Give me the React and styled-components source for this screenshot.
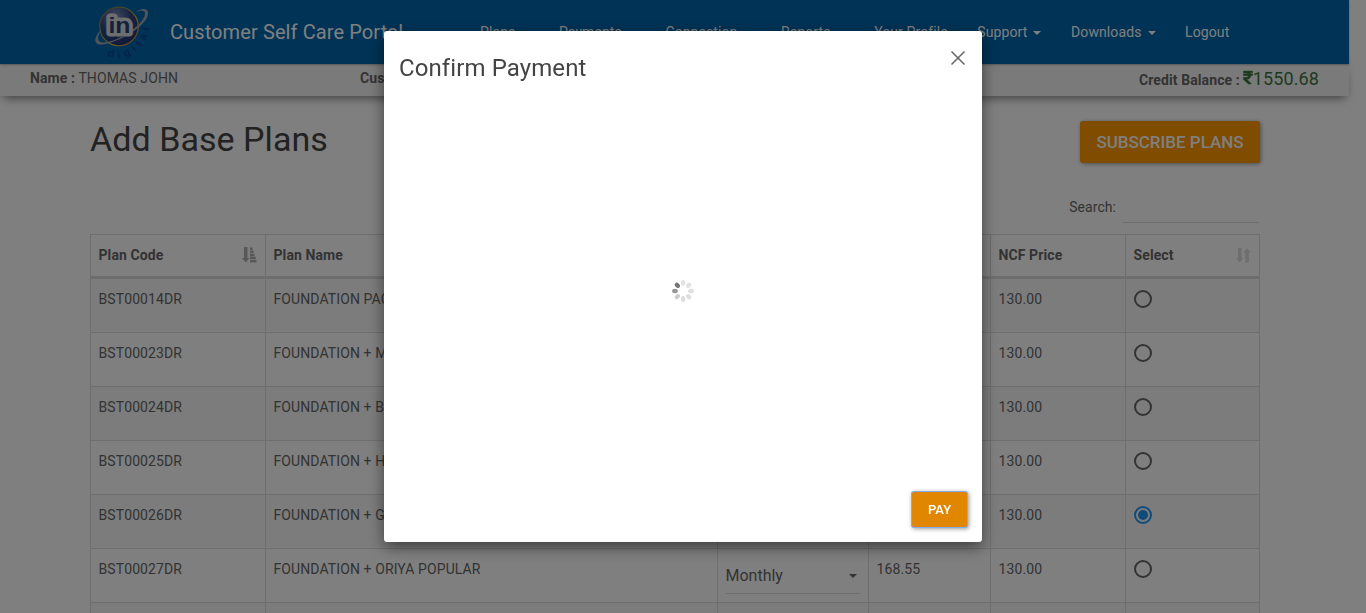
import React from "react";
import styled, { createGlobalStyle, css } from "styled-components";
import { FaRupeeSign } from "react-icons/fa";

const GlobalStyle = createGlobalStyle`
  *, *::before, *::after { box-sizing: border-box; }
  html, body { margin: 0; padding: 0; height: 613px; overflow: hidden; background: #fff; }
  body { font-family: Roboto, "Liberation Sans", sans-serif; font-size: 14px; line-height: 20px; color: #666; }
  h1, h4, p { margin: 0; font-weight: 400; }
  button, input { font-family: inherit; }
`;

const Page = styled.div`
  width: 1366px;
  height: 613px;
  padding-right: 17px;
  overflow: hidden;
`;

const Navbar = styled.header`
  position: relative;
  z-index: 2;
  display: flex;
  align-items: center;
  height: 64px;
  padding-left: 90px;
  background: #0066ad;
  color: #fff;
  box-shadow: 0 1px 2px rgba(0, 0, 0, 0.3);
`;

const Logo = styled.svg`
  flex: none;
  width: 64px;
  height: 64px;
`;

const Brand = styled.div`
  width: 296px;
  padding-left: 16px;
  font-size: 20px;
  letter-spacing: 0.1px;
  white-space: nowrap;
`;

const NavMenu = styled.nav`
  display: flex;
  gap: 29.6px;
  padding-left: 30px;
`;

const NavItem = styled.a`
  display: flex;
  align-items: center;
  font-size: 14px;
  letter-spacing: 0.1px;
  color: #fff;
  white-space: nowrap;
`;

const Caret = styled.span`
  width: 0;
  height: 0;
  margin-top: ${(p) => p.$drop || 0}px;
  margin-left: 6px;
  border-top: 4px solid currentColor;
  border-left: 4px solid transparent;
  border-right: 4px solid transparent;
`;

const AccountBar = styled.section`
  position: relative;
  z-index: 1;
  display: grid;
  grid-template-columns: 330px 1fr auto;
  height: 32px;
  padding: 4px 30px 0;
  background: #f5f5f5;
  box-shadow: 0 7px 10px -4px rgba(0, 0, 0, 0.4), 0 0 8px rgba(0, 0, 0, 0.1);
  letter-spacing: 0.1px;
`;

const Balance = styled.div`
  display: flex;
  align-items: baseline;
  height: 22px;
  padding-top: 1px;
`;

const Amount = styled.span`
  display: flex;
  align-items: baseline;
  margin-left: 3px;
  color: #3c763d;
  font-size: 18px;
  letter-spacing: 0.1px;
  svg { width: 10px; height: 15px; stroke: currentColor; stroke-width: 14px; }
`;

const Main = styled.main`
  width: 1170px;
  margin-left: 90px;
`;

const TitleRow = styled.div`
  display: flex;
  justify-content: space-between;
  height: 96px;
  padding-top: 23px;
`;

const Title = styled.h1`
  font-size: 34px;
  line-height: 40px;
  letter-spacing: 0.05px;
  color: #444;
`;

const SubscribeButton = styled.button`
  width: 180px;
  height: 42px;
  margin-top: 2px;
  padding: 0;
  border: 0;
  border-radius: 3px;
  background: #ff9800;
  color: #fff;
  font-size: 17px;
  font-weight: 500;
  letter-spacing: -0.02px;
  box-shadow: 1px 1px 4px rgba(0, 0, 0, 0.4);
`;

const SearchRow = styled.label`
  display: flex;
  justify-content: flex-end;
  height: 31px;
  padding-right: 1px;
  line-height: 30px;
  letter-spacing: 0.05px;
`;

const SearchInput = styled.input`
  width: 137px;
  height: 31px;
  margin-left: 6px;
  padding: 0;
  border: 0;
  border-bottom: 1px solid #ddd;
  background: transparent;
`;

const Table = styled.div`
  margin-top: 11px;
  border-top: 1px solid #ddd;
  border-left: 1px solid #ddd;
`;

const Row = styled.div`
  display: grid;
  grid-template-columns: 175px 452px 151px 122px 135px 134px;
  height: ${(p) => (p.$head ? 44 : 54)}px;
  background: ${(p) => (p.$striped ? "#f9f9f9" : "#fff")};
`;

const Cell = styled.div`
  padding: 10px 8px 0 7.5px;
  border-right: 1px solid #ddd;
  border-bottom: 1px solid #ddd;
  letter-spacing: 0.1px;
  white-space: nowrap;
  ${(p) => p.$head && css`
    display: flex;
    justify-content: space-between;
    border-bottom-width: 3px;
    font-weight: 700;
  `}
`;

const SortIcon = styled.svg`
  width: 15px;
  height: 16px;
  margin-top: 2px;
  fill: #666;
  opacity: ${(p) => (p.$active ? 0.5 : 0.22)};
`;

const Select = styled.div`
  display: flex;
  justify-content: space-between;
  align-items: center;
  height: 35px;
  padding-right: 3px;
  border-bottom: 1px solid #ddd;
  font-size: 16px;
  letter-spacing: 0;
  color: #666;
`;

const Radio = styled.span`
  display: flex;
  align-items: center;
  justify-content: center;
  width: 18px;
  height: 18px;
  margin-top: 1px;
  border: 2px solid ${(p) => (p.$checked ? "#2196f3" : "#666")};
  border-radius: 50%;
  &::after {
    content: "";
    width: 10px;
    height: 10px;
    border-radius: 50%;
    background: ${(p) => (p.$checked ? "#2196f3" : "transparent")};
  }
`;

const Backdrop = styled.div`
  position: fixed;
  inset: 0;
  z-index: 10;
  padding-top: 31px;
  background: rgba(0, 0, 0, 0.5);
`;

const Dialog = styled.section`
  display: flex;
  flex-direction: column;
  width: 598px;
  height: 511px;
  margin: 0 auto;
  border-radius: 3px;
  background: #fff;
  box-shadow: 0 5px 15px rgba(0, 0, 0, 0.5);
`;

const DialogHeader = styled.div`
  display: flex;
  justify-content: space-between;
  height: 60px;
  padding: 20px 16px 0 15px;
`;

const DialogTitle = styled.h4`
  font-size: 24px;
  line-height: 34px;
  letter-spacing: 0.1px;
  color: #444;
`;

const CloseIcon = styled.svg`
  width: 16px;
  height: 16px;
  stroke: #666;
  stroke-width: 1.5;
`;

const DialogBody = styled.div`
  flex: 1;
  display: flex;
  justify-content: center;
  padding-top: 188px;
`;

const DialogFooter = styled.div`
  display: flex;
  justify-content: flex-end;
  height: 50px;
  padding-right: 15px;
`;

const PayButton = styled.button`
  width: 55px;
  height: 35px;
  padding: 0;
  border: 0;
  border-radius: 2px;
  background: #e08600;
  color: #fff;
  font-size: 13px;
  font-weight: 500;
  box-shadow: 0 0 0 1px #82aceb, 1px 1px 4px 1px rgba(0, 0, 0, 0.4);
`;

const navItems = [
  ["Plans", true],
  ["Payments", true],
  ["Connection", true],
  ["Reports", true],
  ["Your Profile", false],
  ["Support", true],
  ["Downloads", true],
  ["Logout", false],
];

const plans = [
  ["BST00014DR", "FOUNDATION PACK"],
  ["BST00023DR", "FOUNDATION + MARATHI POPULAR"],
  ["BST00024DR", "FOUNDATION + BENGALI POPULAR"],
  ["BST00025DR", "FOUNDATION + HINDI POPULAR"],
  ["BST00026DR", "FOUNDATION + GUJARATI POPULAR"],
  ["BST00027DR", "FOUNDATION + ORIYA POPULAR"],
];
const selectedPlan = "BST00026DR";

const spokes = ["#e3e3e3", "#e3e3e3", "#e0e0e0", "#dedede", "#dcdcdc", "#cdcdcd", "#999", "#777"];

function BrandLogo() {
  return (
    <Logo viewBox="0 0 64 64">
      <defs>
        <radialGradient id="globe" cx="0.4" cy="0.25" r="0.8">
          <stop offset="0" stopColor="#7d92c4" />
          <stop offset="0.5" stopColor="#33477f" />
          <stop offset="1" stopColor="#1b3370" />
        </radialGradient>
        <linearGradient id="rim" x1="0" y1="0" x2="1" y2="1">
          <stop offset="0" stopColor="#b8544a" />
          <stop offset="0.35" stopColor="#7aa04f" />
          <stop offset="0.65" stopColor="#d6b64c" />
          <stop offset="1" stopColor="#c65b3a" />
        </linearGradient>
        <path id="arc" d="M17 56 Q31 61 44 53 Q58 43 60 24" />
      </defs>
      <circle cx="29" cy="26.5" r="19.3" fill="url(#globe)" stroke="url(#rim)" strokeWidth="1.3" />
      <path d="M12 29 C3 37 3 46 13 44.5 C27 43 60 25 58 12 C56.5 7 50 9 46 12 C52 10 55 10 55 14 C54 25 27 42 14 42.5 C6 43 7 36 12 29Z" fill="#9ea8b3" />
      <text x="18.5" y="33" fontFamily="Liberation Sans, sans-serif" fontSize="22" fontWeight="700" fill="#2c3f78" stroke="#d9dce0" strokeWidth="7" strokeLinejoin="round" paintOrder="stroke" textLength="22" lengthAdjust="spacingAndGlyphs">in</text>
      <text fontFamily="Liberation Sans, sans-serif" fontSize="11" fontWeight="700" fill="#08459f" letterSpacing="4.3">
        <textPath href="#arc">digital</textPath>
      </text>
    </Logo>
  );
}

function SortActive() {
  return (
    <SortIcon $active viewBox="0 0 15 16">
      <path d="M2 0h3.5v11h2L3.75 15.5 0 11h2zM8 .5h2.5v2.5H8zM8 3.6h3.5v2.5H8zM8 6.7h4.5v2.5H8zM8 9.8h5.7v2.5H8zM8 12.9h6.5v2.5H8z" />
    </SortIcon>
  );
}

function SortIdle() {
  return (
    <SortIcon viewBox="0 0 15 16">
      <path d="M2 1h3.5v10h2L3.75 15.5 0 11h2zM9.3 15.5h3.5V5.5h2L11 1 7.3 5.5h2z" />
    </SortIcon>
  );
}

function Spinner() {
  return (
    <svg width="24" height="24" viewBox="-12 -12 24 24">
      {spokes.map((fill, i) => (
        <ellipse key={i} cx="0" cy="-8" rx="2.2" ry="2.9" fill={fill} transform={`rotate(${i * 45})`} />
      ))}
    </svg>
  );
}

function PlanRow({ code, name, striped }) {
  return (
    <Row $striped={striped}>
      <Cell>{code}</Cell>
      <Cell>{name}</Cell>
      <Cell><Select>Monthly<Caret /></Select></Cell>
      <Cell>168.55</Cell>
      <Cell>130.00</Cell>
      <Cell><Radio $checked={code === selectedPlan} /></Cell>
    </Row>
  );
}

function EmptyRow() {
  return (
    <Row $striped>
      <Cell /><Cell /><Cell /><Cell /><Cell /><Cell />
    </Row>
  );
}

export default function App() {
  return (
    <>
      <GlobalStyle />
      <Page>
        <Navbar>
          <BrandLogo />
          <Brand>Customer Self Care Portal</Brand>
          <NavMenu>
            {navItems.map(([label, menu]) => (
              <NavItem key={label}>{label}{menu && <Caret $drop={2} />}</NavItem>
            ))}
          </NavMenu>
        </Navbar>
        <AccountBar>
          <div><b>Name :</b> THOMAS JOHN</div>
          <div><b>Customer ID :</b></div>
          <Balance><b>Credit Balance :</b><Amount><FaRupeeSign />1550.68</Amount></Balance>
        </AccountBar>
        <Main>
          <TitleRow>
            <Title>Add Base Plans</Title>
            <SubscribeButton>SUBSCRIBE PLANS</SubscribeButton>
          </TitleRow>
          <SearchRow>Search:<SearchInput /></SearchRow>
          <Table>
            <Row $head>
              <Cell $head>Plan Code<SortActive /></Cell>
              <Cell $head>Plan Name</Cell>
              <Cell $head>Duration</Cell>
              <Cell $head>Price</Cell>
              <Cell $head>NCF Price</Cell>
              <Cell $head>Select<SortIdle /></Cell>
            </Row>
            {plans.map(([code, name], i) => (
              <PlanRow key={code} code={code} name={name} striped={i % 2 === 0} />
            ))}
            <EmptyRow />
          </Table>
        </Main>
      </Page>
      <Backdrop>
        <Dialog>
          <DialogHeader>
            <DialogTitle>Confirm Payment</DialogTitle>
            <CloseIcon viewBox="0 0 16 16"><path d="M1.5 .5 14.5 13.5M14.5 .5 1.5 13.5" /></CloseIcon>
          </DialogHeader>
          <DialogBody><Spinner /></DialogBody>
          <DialogFooter><PayButton>PAY</PayButton></DialogFooter>
        </Dialog>
      </Backdrop>
    </>
  );
}
